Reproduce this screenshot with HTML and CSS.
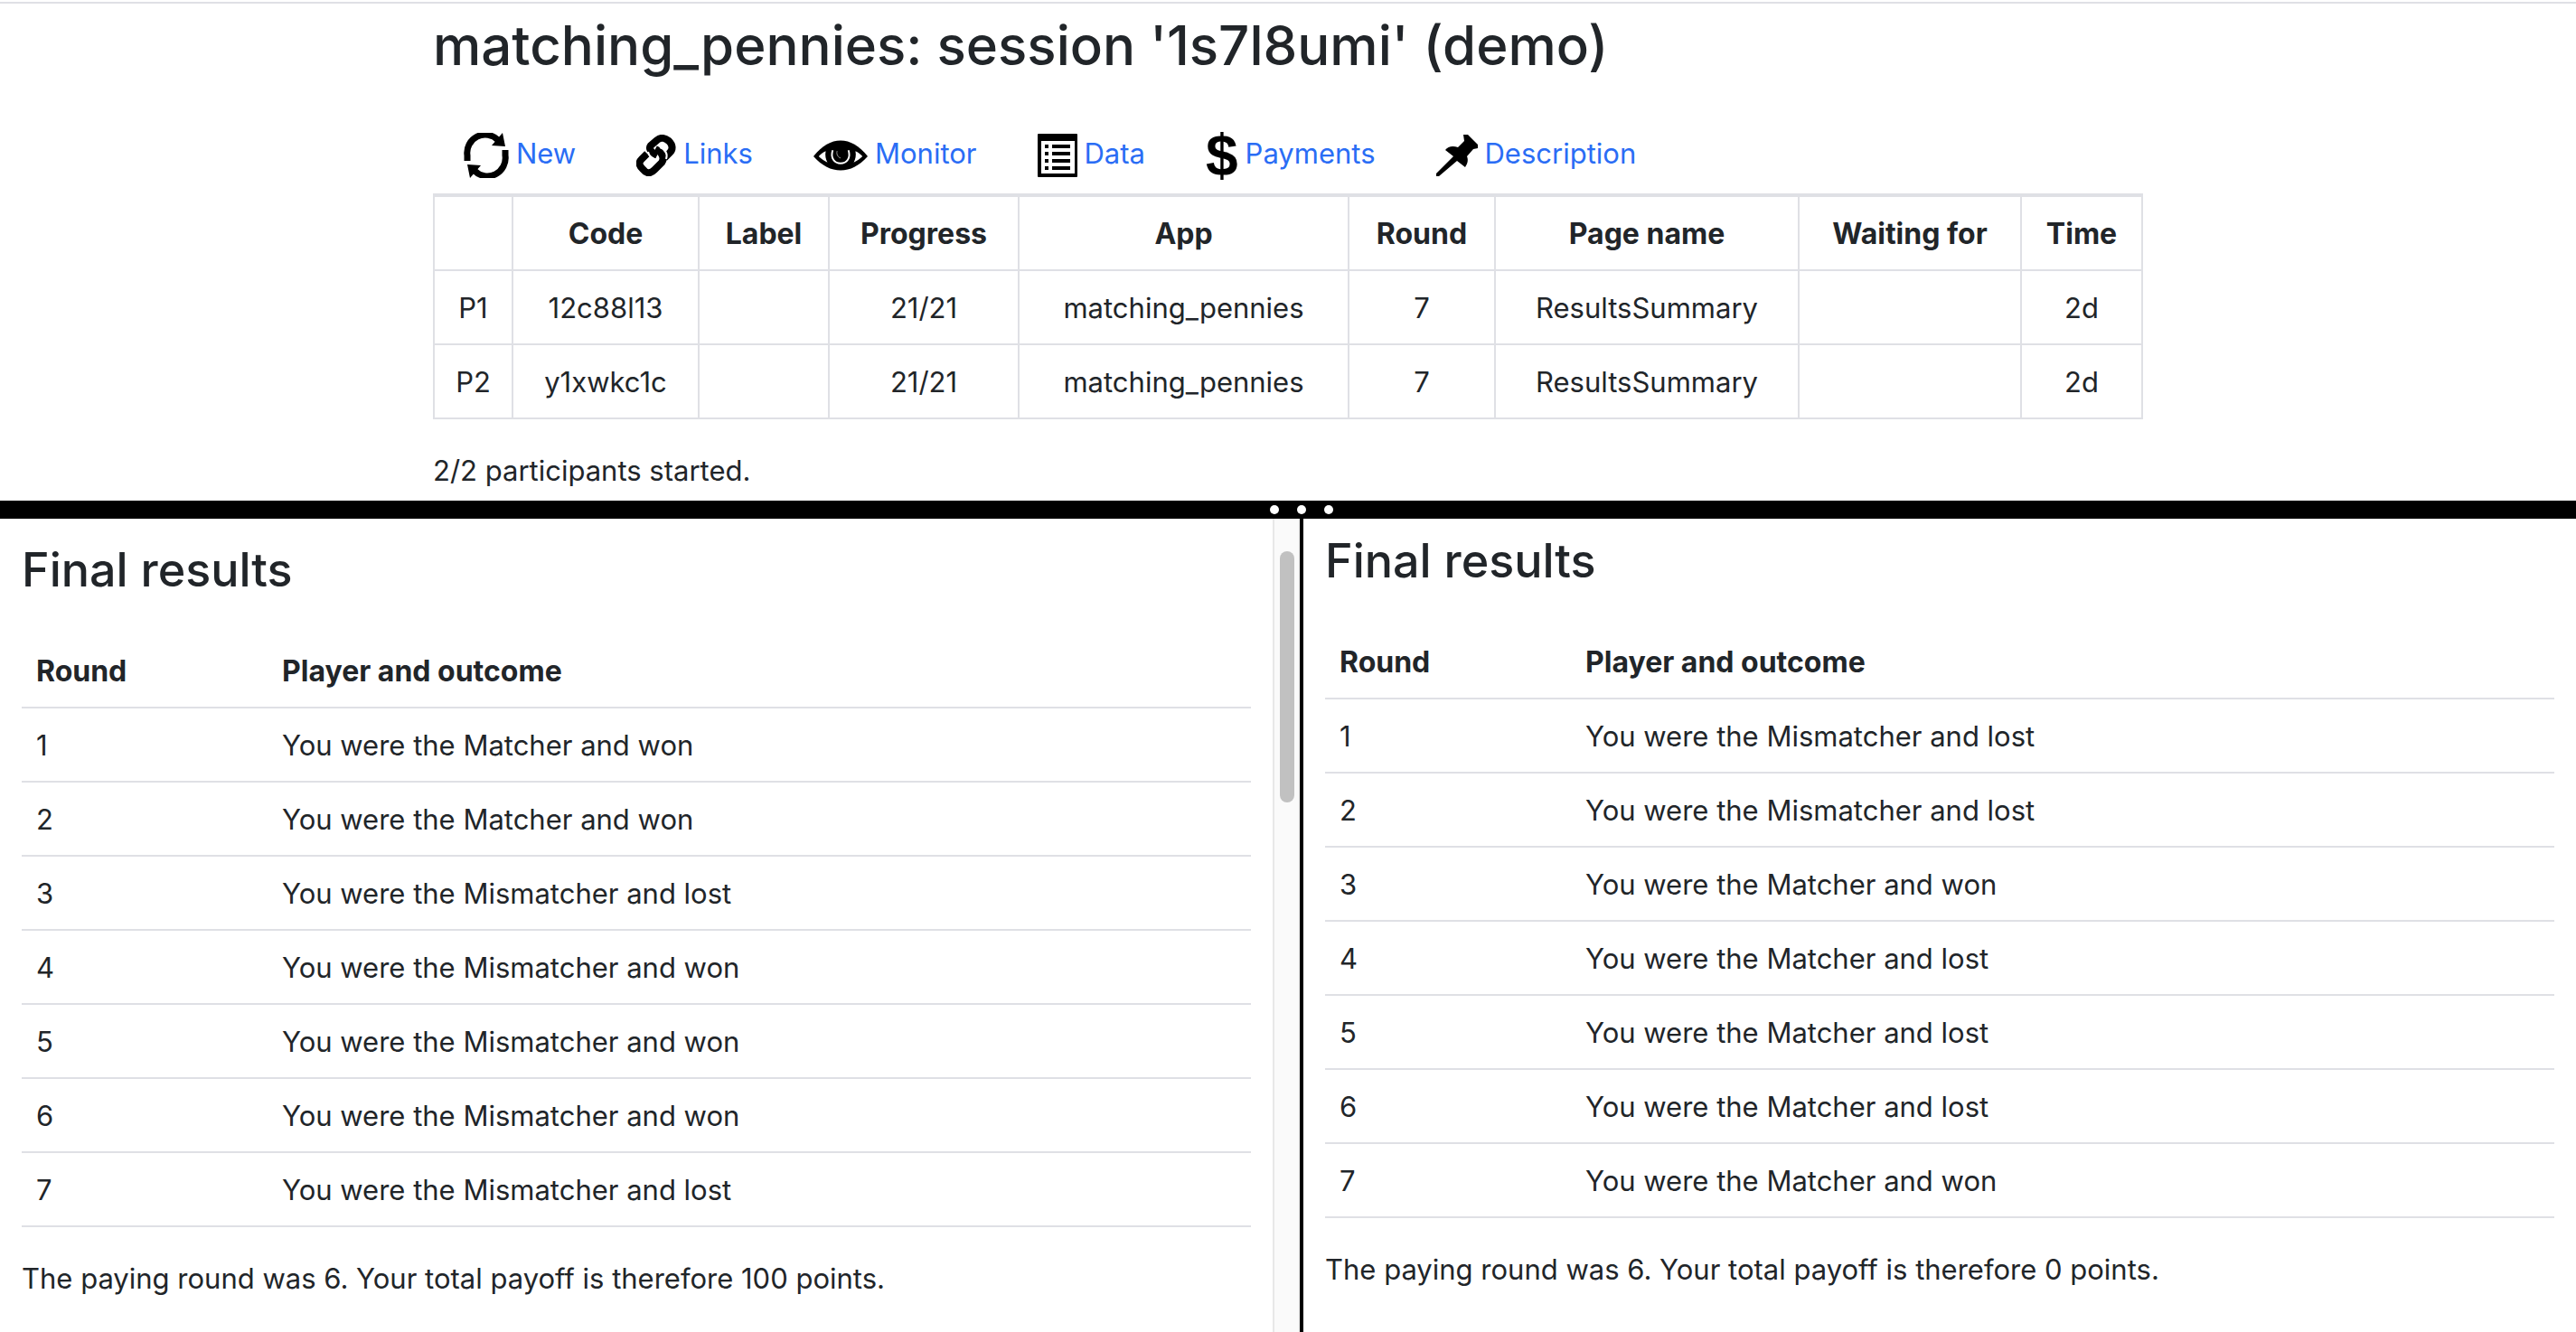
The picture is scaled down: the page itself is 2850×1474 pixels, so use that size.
FILE: index.html
```html
<!DOCTYPE html>
<html lang="en">
<head>
<meta charset="utf-8">
<meta name="viewport" content="width=device-width, initial-scale=1">
<title>matching_pennies: session '1s7l8umi' (demo)</title>
<link rel="stylesheet" href="styles.css">
</head>
<body>
<main class="session">
  <div class="container">
    <h1 class="session-title">matching_pennies: session '1s7l8umi' (demo)</h1>
    <nav class="tabs" aria-label="Session">
      <a class="tab" href="#new">
        <svg class="icon" width="50" height="50" viewBox="0 0 50 50" aria-hidden="true">
          <g fill="none" stroke="#000" stroke-width="7"><path d="M4 31V25A20 20 0 0 1 38 8"/><path d="M46 18V25A20 20 0 0 1 12 42"/></g>
          <path d="M43 0L46 15L31 14ZM7 50L4 35L19 36Z"/>
          <path fill="#fff" d="M0 31H9V35H0ZM41 15H50V19H41Z"/>
        </svg>
        <span>New</span>
      </a>
      <a class="tab" href="#links">
        <svg class="icon" width="44" height="46" viewBox="0 0 44 46" aria-hidden="true">
          <g fill="none" stroke-linejoin="round" stroke-linecap="butt">
            <path stroke="#000" stroke-width="8" d="M23 23C17 20 13 16 16 12L23 6C28 2 32 4 36 7C40 11 41 16 37 20L31 26" />
            <path stroke="#000" stroke-width="8" d="M12 21L6 27C2 31 3 34 7 38C11 43 15 44 20 39L28 31C31 27 30 23 25 18L21 16"/>
            <path stroke="#fff" stroke-width="2" d="M13 19C14 25 19 27 23 28M26 14C32 16 35 21 33 27"/>
          </g>
        </svg>
        <span>Links</span>
      </a>
      <a class="tab" href="#monitor">
        <svg class="icon" width="60" height="34" viewBox="0 0 62 34" aria-hidden="true">
          <path d="M0 18C10 6 20 0 31 0S52 6 62 18C52 29 42 34 31 34S10 29 0 18Z"/>
          <path fill="#fff" d="M6 18C9 15 11 13 14 12C13 17 14 21 16 25C12 23 9 21 6 18ZM56 18C53 15 51 13 48 12C49 17 48 21 46 25C50 23 53 21 56 18Z"/>
          <path d="M22 11C19 20 24 26 31 26S43 20 40 11" fill="none" stroke="#fff" stroke-width="2"/>
          <path d="M27 12C26 16 28 19 31 20" fill="none" stroke="#999" stroke-width="1"/>
        </svg>
        <span>Monitor</span>
      </a>
      <a class="tab" href="#data">
        <svg class="icon" width="44" height="48" viewBox="0 0 44 48" aria-hidden="true">
          <rect width="44" height="48" rx="1"/>
          <rect x="4" y="8" width="37" height="36" fill="#fff"/>
          <path d="M8 12h4v4H8zM16 12h20v4H16zM8 20h4v4H8zM16 20h20v4H16zM8 28h4v4H8zM16 28h20v4H16zM8 36h4v4H8zM16 36h20v4H16z"/>
        </svg>
        <span>Data</span>
      </a>
      <a class="tab" href="#payments">
        <span class="icon dollar" aria-hidden="true">$</span>
        <span>Payments</span>
      </a>
      <a class="tab" href="#description">
        <svg class="icon" width="46" height="46" viewBox="0 0 46 46" aria-hidden="true">
          <path d="M30 0H35L46 11V15L41 16L34 24C36 29 34 33 32 36L23 29L3 46H0V43L19 24L10 17C13 13 18 12 24 14L31 7Z"/>
        </svg>
        <span>Description</span>
      </a>
    </nav>
    <table class="monitor">
      <colgroup><col class="c-id"><col class="c-code"><col class="c-label"><col class="c-progress"><col class="c-app"><col class="c-round"><col class="c-page"><col class="c-wait"><col class="c-time"></colgroup>
      <thead>
        <tr><th></th><th>Code</th><th>Label</th><th>Progress</th><th>App</th><th>Round</th><th>Page name</th><th>Waiting for</th><th>Time</th></tr>
      </thead>
      <tbody>
        <tr><td>P1</td><td>12c88l13</td><td></td><td>21/21</td><td>matching_pennies</td><td>7</td><td>ResultsSummary</td><td></td><td>2d</td></tr>
        <tr><td>P2</td><td>y1xwkc1c</td><td></td><td>21/21</td><td>matching_pennies</td><td>7</td><td>ResultsSummary</td><td></td><td>2d</td></tr>
      </tbody>
    </table>
    <p class="note">2/2 participants started.</p>
  </div>
</main>
<div class="splitter" role="separator">
  <span class="dot"></span><span class="dot"></span><span class="dot"></span>
</div>
<div class="players">
  <section class="player player-left">
    <div class="player-body">
      <h2 class="player-title">Final results</h2>
      <table class="results">
        <thead><tr><th class="c-num">Round</th><th>Player and outcome</th></tr></thead>
        <tbody>
          <tr><td>1</td><td>You were the Matcher and won</td></tr>
          <tr><td>2</td><td>You were the Matcher and won</td></tr>
          <tr><td>3</td><td>You were the Mismatcher and lost</td></tr>
          <tr><td>4</td><td>You were the Mismatcher and won</td></tr>
          <tr><td>5</td><td>You were the Mismatcher and won</td></tr>
          <tr><td>6</td><td>You were the Mismatcher and won</td></tr>
          <tr><td>7</td><td>You were the Mismatcher and lost</td></tr>
        </tbody>
      </table>
      <p class="note">The paying round was 6. Your total payoff is therefore 100 points.</p>
    </div>
    <div class="scrollbar"><div class="thumb"></div></div>
  </section>
  <section class="player player-right">
    <div class="player-body">
      <h2 class="player-title">Final results</h2>
      <table class="results">
        <thead><tr><th class="c-num">Round</th><th>Player and outcome</th></tr></thead>
        <tbody>
          <tr><td>1</td><td>You were the Mismatcher and lost</td></tr>
          <tr><td>2</td><td>You were the Mismatcher and lost</td></tr>
          <tr><td>3</td><td>You were the Matcher and won</td></tr>
          <tr><td>4</td><td>You were the Matcher and lost</td></tr>
          <tr><td>5</td><td>You were the Matcher and lost</td></tr>
          <tr><td>6</td><td>You were the Matcher and lost</td></tr>
          <tr><td>7</td><td>You were the Matcher and won</td></tr>
        </tbody>
      </table>
      <p class="note">The paying round was 6. Your total payoff is therefore 0 points.</p>
    </div>
  </section>
</div>
</body>
</html>
```

FILE: styles.css
```css
* { box-sizing: border-box; }

body {
  margin: 0;
  min-height: 100vh;
  display: flex;
  flex-direction: column;
  font: 400 31px/48px Inter, "Liberation Sans", sans-serif;
  color: #212529;
  background: #fff;
}

h1, h2, p { margin: 0; }
table { border-spacing: 0; }
th { font-size: 32px; }

/* Session monitor */
.session { padding: 2px 0 9px; }
.session::before {
  content: "";
  display: block;
  height: 2px;
  background: #dfe0e5;
}
.container {
  max-width: 1892px;
  margin: 0 auto;
  padding-top: 8px;
}
.session-title {
  font-size: 60px;
  line-height: 76px;
  font-weight: 500;
}

.tabs {
  display: flex;
  gap: 67px;
  height: 48px;
  margin: 58px 0 20px;
  padding-left: 34px;
}
.tab {
  display: flex;
  align-items: center;
  gap: 8px;
  color: #2a6df5;
  text-decoration: none;
}
.icon { flex: none; margin-top: 4px; }
.dollar {
  font-family: "Liberation Sans", sans-serif;
  font-weight: 700;
  font-size: 64px;
  color: #000;
}

.monitor {
  width: 100%;
  table-layout: fixed;
  border-top: 4px solid #dfe0e5;
  border-left: 2px solid #dfe0e5;
  text-align: center;
}
.monitor th, .monitor td {
  padding: 17px 0 15px;
  height: 82px;
  border: solid #dfe0e5;
  border-width: 0 2px 2px 0;
}
.c-id { width: 87px; }
.c-code { width: 206px; }
.c-label { width: 144px; }
.c-progress { width: 210px; }
.c-app { width: 365px; }
.c-round { width: 162px; }
.c-page { width: 336px; }
.c-wait { width: 246px; }
.c-time { width: 134px; }

.note { margin-top: 33px; }

/* Draggable bar between panes */
.splitter {
  height: 20px;
  padding-left: 30px;
  display: flex;
  justify-content: center;
  align-items: center;
  gap: 20px;
  background: #000;
}
.dot {
  width: 10px;
  height: 10px;
  border-radius: 50%;
  background: #fff;
}

/* Player panes */
.players {
  flex: 1;
  display: grid;
  grid-template-columns: 1438fr 1412fr;
}
.player { display: flex; }
.player-body {
  flex: 1;
  padding: 23px 24px 0;
}
.player-right { border-left: 4px solid #000; }
.player-right .player-body { padding-top: 13px; }
.player-title {
  font-size: 52px;
  line-height: 68px;
  font-weight: 500;
}
.results {
  width: 100%;
  margin-top: 37px;
  table-layout: fixed;
  text-align: left;
}
.results th, .results td {
  padding: 17px 16px 15px;
  border-bottom: 2px solid #dfe0e5;
}
.c-num { width: 20%; }

.scrollbar {
  width: 30px;
  padding: 36px 4px 0 6px;
  border-left: 2px solid #e8e8e8;
  border-right: 2px solid #f2f2f2;
  background: #fafafa;
}
.thumb {
  width: 16px;
  height: 278px;
  border-radius: 8px;
  background: #c1c1c1;
}
```
